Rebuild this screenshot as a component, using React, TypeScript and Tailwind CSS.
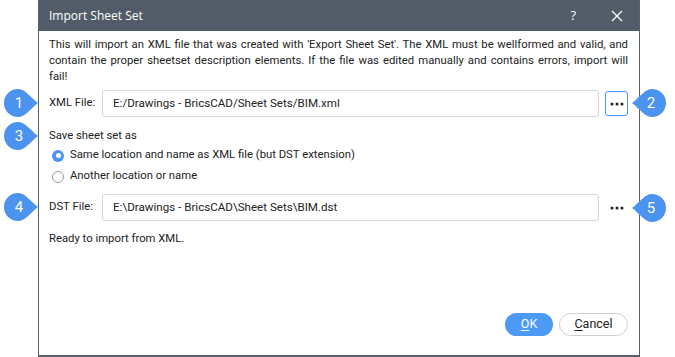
import React from 'react';

const Callout = ({ n, side, top, left }: { n: number; side: 'left' | 'right'; top: number; left: number }) => (
  <div className="absolute" style={{ top, left }}>
    <svg width="36" height="30" viewBox="0 0 36 30">
      {side === 'left' ? (
        <path d="M15 1 A14 14 0 1 0 15 29 C22 29 26 22 35 15 C26 8 22 1 15 1 Z" fill="#4c93ef" />
      ) : (
        <path d="M21 1 A14 14 0 1 1 21 29 C14 29 10 22 1 15 C10 8 14 1 21 1 Z" fill="#4c93ef" />
      )}
      <text
        x={side === 'left' ? 16 : 20}
        y="20"
        textAnchor="middle"
        fill="#fff"
        fontSize="15"
        fontFamily="Roboto, sans-serif"
      >
        {n}
      </text>
    </svg>
  </div>
);

const Dots = () => (
  <svg width="14" height="4" viewBox="0 0 14 4">
    <circle cx="2" cy="2" r="1.5" fill="#222" />
    <circle cx="7" cy="2" r="1.5" fill="#222" />
    <circle cx="12" cy="2" r="1.5" fill="#222" />
  </svg>
);

const App: React.FC = () => {
  return (
    <div className="relative w-[675px] h-[357px] bg-white overflow-hidden font-['Roboto',sans-serif] text-[11.3px] text-[#222]">
      <div className="ml-[38px] w-[602px] h-[357px] border-x-[1.5px] border-b-[2px] border-[#56606c] flex flex-col bg-white">
        {/* title bar */}
        <div className="h-[31px] bg-[#525c69] flex items-center pl-[10px] pr-[14px] text-white shrink-0">
          <span className="font-['Open_Sans',sans-serif] text-[12px]">Import Sheet Set</span>
          <span className="ml-auto mr-[35px] text-[13px] font-['Open_Sans',sans-serif]">?</span>
          <svg width="12" height="12" viewBox="0 0 12 12" className="mr-[2px]">
            <path d="M1 1 L11 11 M11 1 L1 11" stroke="#fff" strokeWidth="1.3" />
          </svg>
        </div>

        <div className="flex-1 flex flex-col pl-[10px] pr-[11px]">
          <p className="pt-[6px] leading-[16px] text-justify">
            This will import an XML file that was created with 'Export Sheet Set'. The XML must be wellformed and valid, and contain the proper sheetset description elements. If the file was edited manually and contains errors, import will fail!
          </p>

          <div className="flex items-center mt-[5px] h-[27px]">
            <span className="w-[53px]">XML File:</span>
            <div className="flex-1 h-[27px] border border-[#d6d6d6] rounded-[3px] flex items-center pl-[10px] text-[11.6px]">
              E:/Drawings - BricsCAD/Sheet Sets/BIM.xml
            </div>
            <div className="ml-[6px] w-[23px] h-[25px] border border-[#4c93ef] rounded-[3px] flex items-center justify-center">
              <Dots />
            </div>
          </div>

          <div className="mt-[11px] leading-[16px]">Save sheet set as</div>

          <label className="flex items-center mt-[3px] ml-[3px] h-[17px]">
            <span className="w-[12px] h-[12px] rounded-full bg-[#4c93ef] flex items-center justify-center">
              <span className="w-[5px] h-[5px] rounded-full bg-white" />
            </span>
            <span className="ml-[6px]">Same location and name as XML file (but DST extension)</span>
          </label>

          <label className="flex items-center mt-[4px] ml-[3px] h-[17px]">
            <span className="w-[12px] h-[12px] rounded-full border border-[#9a9a9a] bg-white" />
            <span className="ml-[6px]">Another location or name</span>
          </label>

          <div className="flex items-center mt-[9px] h-[27px]">
            <span className="w-[53px]">DST File:</span>
            <div className="flex-1 h-[27px] border border-[#d6d6d6] rounded-[3px] flex items-center pl-[10px] text-[11.6px]">
              E:\Drawings - BricsCAD\Sheet Sets\BIM.dst
            </div>
            <div className="ml-[6px] w-[23px] h-[25px] flex items-center justify-center">
              <Dots />
            </div>
          </div>

          <div className="mt-[10px] leading-[16px]">Ready to import from XML.</div>

          <div className="mt-auto mb-[19px] flex justify-end gap-[6px]">
            <button className="w-[48px] h-[23px] rounded-full bg-[#4c9af5] text-white text-[12.5px]">
              <span className="underline underline-offset-2">O</span>K
            </button>
            <button className="w-[69px] h-[23px] rounded-full border border-[#cfcfcf] bg-white text-[12.5px] text-[#222]">
              <span className="underline underline-offset-2">C</span>ancel
            </button>
          </div>
        </div>
      </div>

      <Callout n={1} side="left" top={88} left={3} />
      <Callout n={2} side="right" top={88} left={631} />
      <Callout n={3} side="left" top={121} left={3} />
      <Callout n={4} side="left" top={192} left={3} />
      <Callout n={5} side="right" top={193} left={631} />
    </div>
  );
};

export default App;
